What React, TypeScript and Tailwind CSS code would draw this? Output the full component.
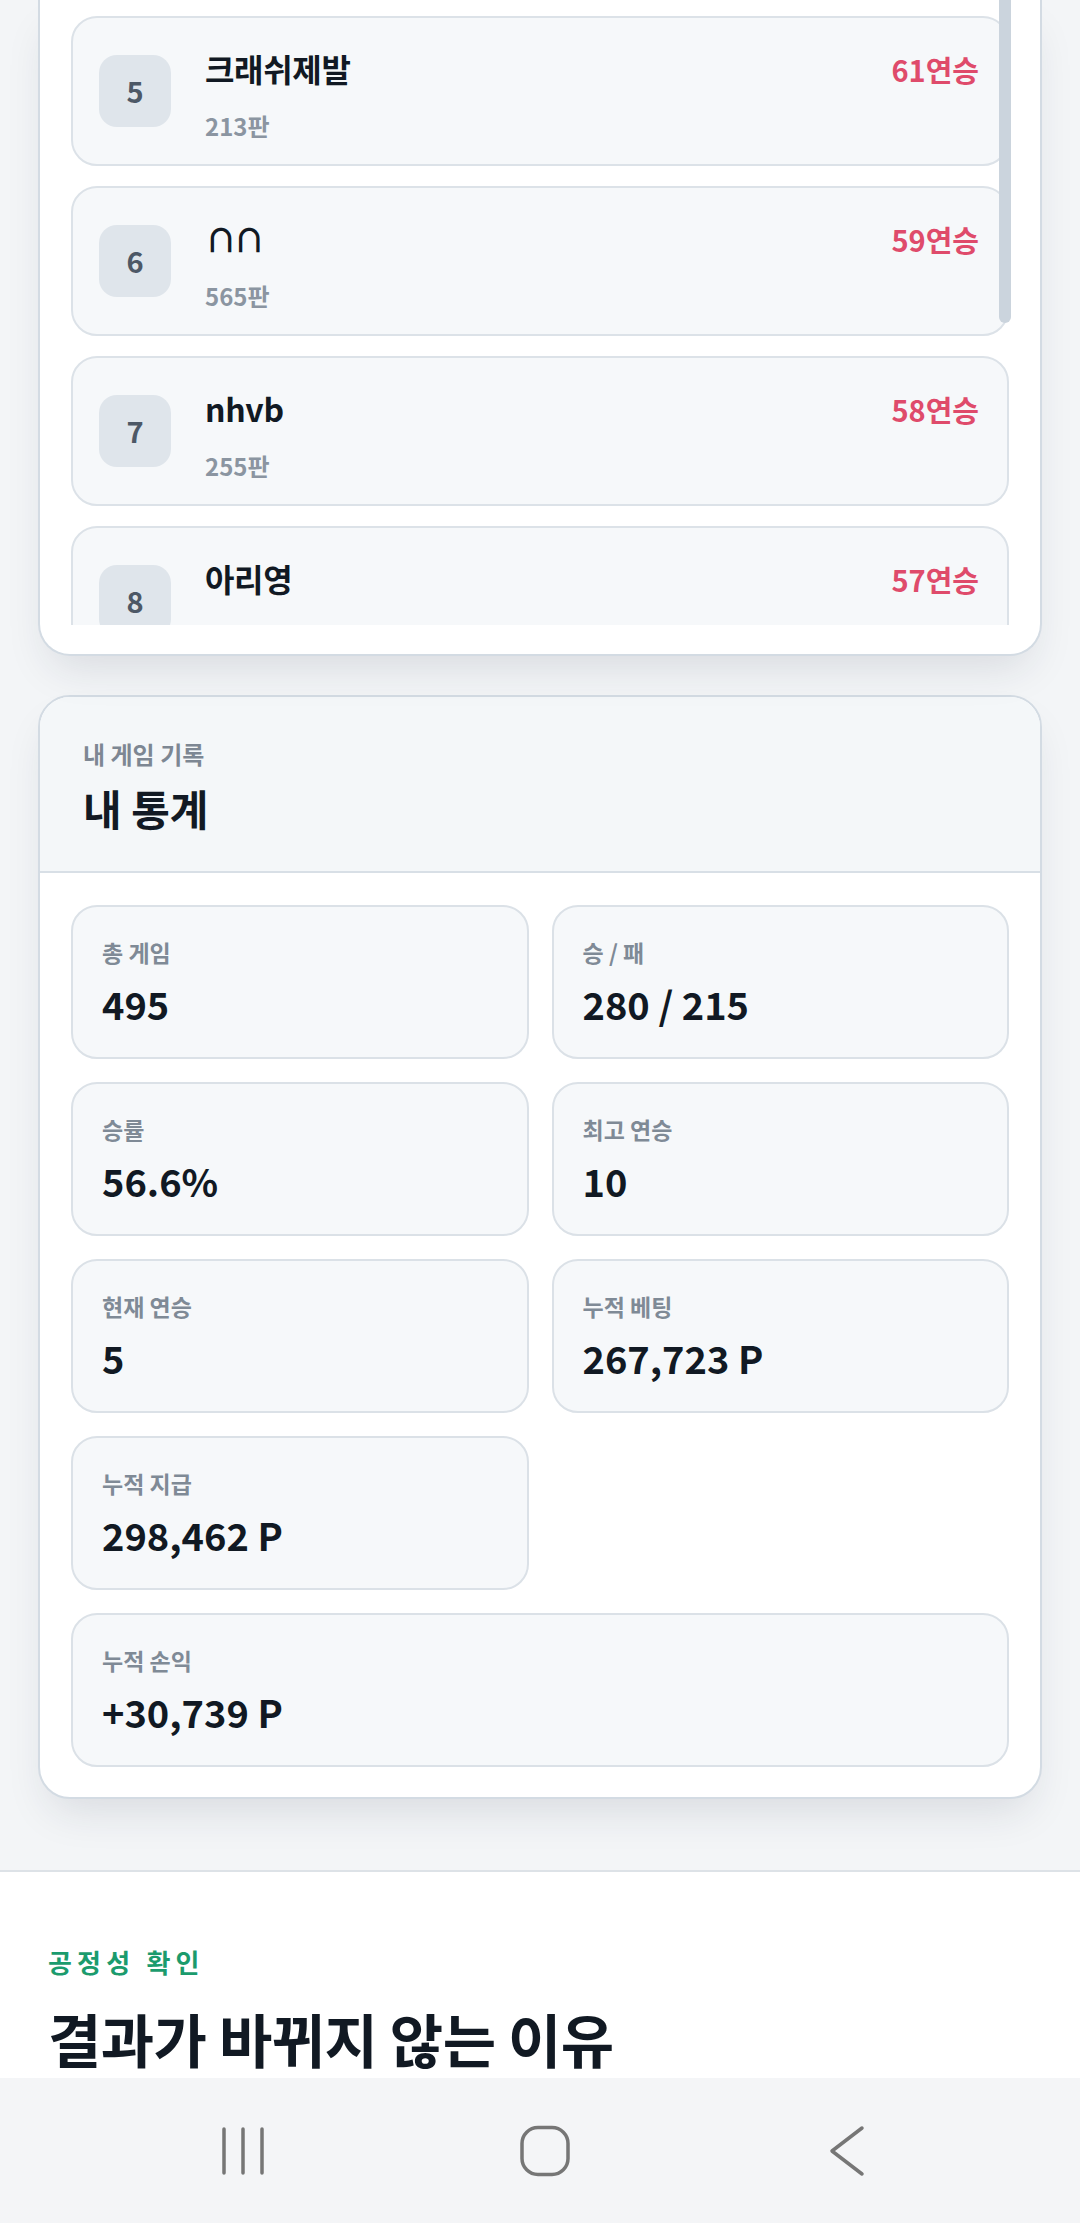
import React from "react";

interface RankItem {
  rank: number;
  name: string;
  games: number;
  streak: number;
}

const rankings: RankItem[] = [
  { rank: 5, name: "크래쉬제발", games: 213, streak: 61 },
  { rank: 6, name: "∩∩", games: 565, streak: 59 },
  { rank: 7, name: "nhvb", games: 255, streak: 58 },
  { rank: 8, name: "아리영", games: 312, streak: 57 },
];

const stats = [
  { label: "총 게임", value: "495" },
  { label: "승 / 패", value: "280 / 215" },
  { label: "승률", value: "56.6%" },
  { label: "최고 연승", value: "10" },
  { label: "현재 연승", value: "5" },
  { label: "누적 베팅", value: "267,723 P" },
  { label: "누적 지급", value: "298,462 P" },
];

function RankRow({ item }: { item: RankItem }) {
  return (
    <div className="flex h-[150px] shrink-0 items-center rounded-[26px] border-2 border-[#dce2e8] bg-[#f6f8fa] pl-[26px] pr-[28px]">
      <div className="flex h-[72px] w-[72px] shrink-0 items-center justify-center rounded-[18px] bg-[#dfe5eb] text-[29px] font-bold text-[#4d5866]">
        {item.rank}
      </div>
      <div className="ml-[34px] flex flex-1 flex-col pt-[6px]">
        <div className="flex items-baseline justify-between">
          <span className="text-[32px] font-bold leading-[42px] tracking-[-0.01em] text-[#111923]">
            {item.name === "∩∩" ? <span className="tracking-[-0.12em]">{item.name}</span> : item.name}
          </span>
          <span className="text-[29px] font-bold leading-[42px] text-[#df4b6b]">{item.streak}연승</span>
        </div>
        <span className="mt-[20px] text-[24px] font-semibold leading-[32px] text-[#8b95a1]">{item.games}판</span>
      </div>
    </div>
  );
}

function StatCard({ label, value, wide }: { label: string; value: string; wide?: boolean }) {
  return (
    <div
      className={`flex h-[154px] flex-col rounded-[26px] border-2 border-[#dbe1e7] bg-[#f6f8fa] px-[29px] pt-[29px] ${
        wide ? "col-span-2" : ""
      }`}
    >
      <span className="text-[23px] font-semibold leading-[32px] text-[#7f8a96]">{label}</span>
      <span className="mt-[14px] text-[38px] font-bold leading-[44px] text-[#111923]">{value}</span>
    </div>
  );
}

function NavBar() {
  return (
    <nav className="fixed bottom-0 left-0 right-0 flex h-[145px] items-center justify-center gap-[242px] bg-[#f4f5f7] pl-[10px]">
      <svg width="60" height="60" viewBox="0 0 60 60" fill="none" stroke="#767676" strokeWidth="3.5" strokeLinecap="round">
        <path d="M11 8v44M30 8v44M49 8v44" />
      </svg>
      <svg width="60" height="60" viewBox="0 0 60 60" fill="none" stroke="#767676" strokeWidth="3.5">
        <rect x="7" y="6.5" width="46" height="47" rx="16" />
      </svg>
      <svg width="60" height="60" viewBox="0 0 60 60" fill="none" stroke="#767676" strokeWidth="3.5" strokeLinecap="round" strokeLinejoin="round">
        <path d="M45 7L15 30l30 23" />
      </svg>
    </nav>
  );
}

export default function App() {
  return (
    <div className="min-h-screen bg-white font-['Noto_Sans_CJK_KR','Noto_Sans',sans-serif]">
      <div className="border-b-2 border-[#dde2e7] bg-[#f3f5f7] px-[38px] pb-[71px]">
        {/* Ranking list card (scrolled) */}
        <div className="relative rounded-b-[32px] border-2 border-t-0 border-[#d3dbe3] bg-white pb-[29px] shadow-[0_22px_44px_-12px_rgba(30,41,59,0.13)]">
          <div className="flex h-[625px] flex-col gap-[20px] overflow-hidden px-[31px] pt-[16px]">
            {rankings.map((r) => (
              <RankRow key={r.rank} item={r} />
            ))}
          </div>
          <div className="absolute right-[29px] top-0 h-[323px] w-[12px] rounded-b-[6px] bg-[#cbd4dd]" />
        </div>

        {/* My stats card */}
        <div className="mt-[39px] overflow-hidden rounded-[32px] border-2 border-[#d3dbe3] bg-white shadow-[0_22px_44px_-12px_rgba(30,41,59,0.13)]">
          <div className="border-b-2 border-[#d8dfe6] bg-[#f4f7f9] px-[43px] pb-[37px] pt-[41px]">
            <div className="text-[24px] font-semibold leading-[32px] text-[#7d8793]">내 게임 기록</div>
            <div className="mt-[12px] text-[42px] font-bold leading-[52px] text-[#121a24]">내 통계</div>
          </div>
          <div className="grid grid-cols-2 gap-[23px] px-[31px] pb-[30px] pt-[32px]">
            {stats.map((s) => (
              <StatCard key={s.label} label={s.label} value={s.value} />
            ))}
            <StatCard label="누적 손익" value="+30,739 P" wide />
          </div>
        </div>
      </div>

      <section className="px-[48px] pb-[240px] pt-[73px]">
        <div className="text-[26px] font-bold leading-[34px] tracking-[0.2em] text-[#1b9b6d]">공정성 확인</div>
        <h2 className="mt-[22px] text-[58px] font-bold leading-[75px] tracking-[-0.01em] text-[#111923]">
          결과가 바뀌지 않는 이유
        </h2>
      </section>

      <NavBar />
    </div>
  );
}
